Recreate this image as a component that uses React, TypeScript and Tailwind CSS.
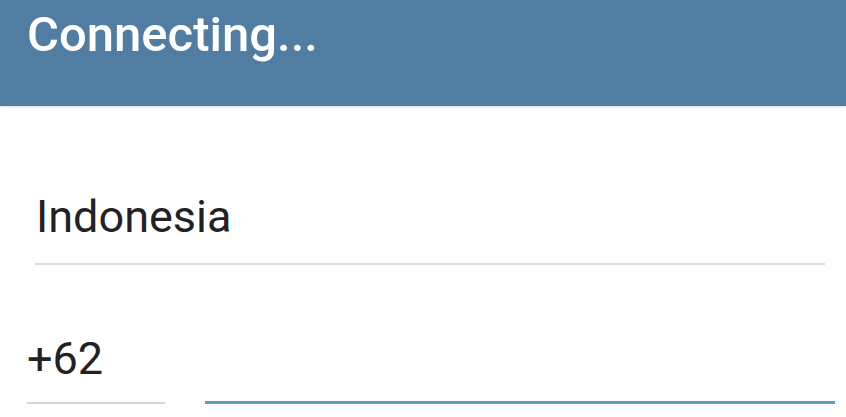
export default function App() {
  return (
    <div className="w-[846px] h-[417px] bg-white overflow-hidden" style={{ fontFamily: 'Roboto, "Noto Sans", sans-serif' }}>
      <div className="h-[106px] bg-[#527da3] pl-[27px] pt-[6px] shadow-[0_1px_2px_rgba(0,0,0,0.15)]">
        <div className="text-white font-medium text-[49px] leading-[57px]">Connecting...</div>
      </div>
      <div className="pl-[35px] pr-[21px] pt-[85px]">
        <div className="text-[#222] text-[45px] leading-[52px] pl-[1px]">Indonesia</div>
        <div className="mt-[20px] h-[2px] bg-[#dcdcdc]" />
      </div>
      <div className="flex items-end pl-[27px] pr-[11px] pt-[68px]">
        <div className="w-[138px]">
          <div className="text-[#222] text-[45px] leading-[51px]">+62</div>
          <div className="mt-[18px] h-[2px] bg-[#d6d6d6]" />
        </div>
        <div className="flex-1 ml-[40px] h-[3px] bg-[#5b9cc3]" />
      </div>
    </div>
  );
}
